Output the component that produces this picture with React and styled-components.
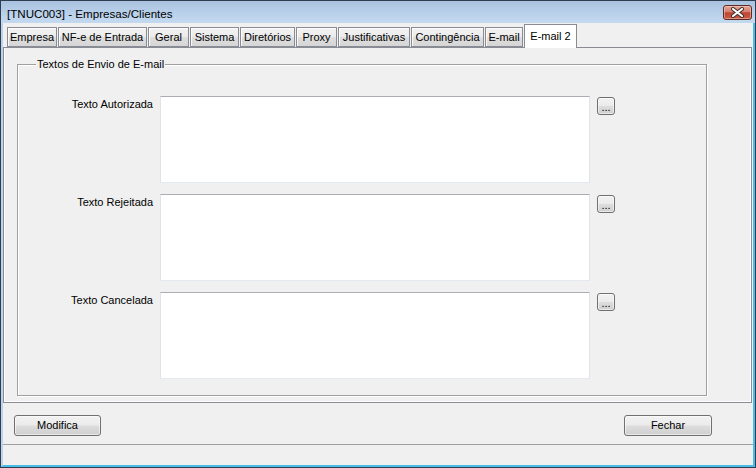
import React from "react";
import styled, { createGlobalStyle } from "styled-components";

const Global = createGlobalStyle`
  html, body { margin: 0; padding: 0; background: #ffffff; }
  body { font-family: "Liberation Sans", Arial, sans-serif; font-size: 11px; color: #000; }
  * { box-sizing: border-box; }
`;

const Window = styled.div`
  width: 756px;
  height: 468px;
  border: 1px solid #2f3d50;
  display: flex;
  flex-direction: column;
  background: #bcd3ec;
  font-family: "Liberation Sans", Arial, sans-serif;
  font-size: 11px;
`;

const TitleBar = styled.div`
  height: 22px;
  flex: none;
  display: flex;
  align-items: flex-start;
  justify-content: space-between;
  padding: 4px 3px 0 6px;
  background: linear-gradient(#a9c2df, #bdd4ed 70%, #c3d9f0);
`;

const Title = styled.div`
  margin-top: 2px;
  line-height: 13px;
  font-size: 11.6px;
  color: #000;
  white-space: nowrap;
`;

const CloseButton = styled.div`
  width: 29px;
  height: 15px;
  border: 1px solid #5b2b26;
  border-radius: 3px;
  background: linear-gradient(#e6a597 0%, #d6806f 45%, #bf4532 52%, #cc5a43 100%);
  display: flex;
  align-items: center;
  justify-content: center;
  box-shadow: inset 0 0 0 1px rgba(255, 220, 210, 0.45);
`;

const Client = styled.div`
  flex: 1;
  display: flex;
  flex-direction: column;
  background: #f0f0f0;
  border-left: 2px solid #bcd3ec;
  border-right: 2px solid #49bce8;
  border-bottom: 2px solid #49bce8;
`;

const TabStrip = styled.div`
  height: 24px;
  flex: none;
  display: flex;
  align-items: flex-end;
  gap: 1px;
  padding-left: 4px;
  position: relative;
  z-index: 1;
`;

const Tab = styled.div`
  width: ${(p) => p.$w}px;
  height: ${(p) => (p.$active ? 24 : 20)}px;
  margin-bottom: ${(p) => (p.$active ? -1 : 0)}px;
  border: 1px solid #898c95;
  border-bottom: ${(p) => (p.$active ? "none" : "1px solid #898c95")};
  background: ${(p) =>
    p.$active
      ? "#ffffff"
      : "linear-gradient(#f3f3f3 0%, #ebebeb 50%, #dedede 52%, #d6d6d6 100%)"};
  box-shadow: ${(p) => (p.$active ? "none" : "inset 1px 1px 0 rgba(255,255,255,0.8)")};
  display: flex;
  align-items: center;
  justify-content: center;
  line-height: 13px;
  white-space: nowrap;
  color: #000;
`;

const TabPanel = styled.div`
  height: 356px;
  flex: none;
  margin-right: 1px;
  border: 1px solid #898c95;
  box-shadow: inset 1px 0 0 #fff, inset -1px 0 0 #fff, inset 0 -1px 0 #fff;
  padding: 16px 0 0 13px;
`;

const GroupBox = styled.div`
  width: 690px;
  height: 332px;
  border: 1px solid #a0a0a0;
  box-shadow: 1px 1px 0 #fff, inset 1px 1px 0 #fff;
  display: flex;
  flex-direction: column;
  align-items: flex-start;
`;

const GroupTitle = styled.div`
  margin: -7px 0 0 18px;
  padding: 0 1px;
  line-height: 13px;
  background: #f0f0f0;
  white-space: nowrap;
`;

const Rows = styled.div`
  display: flex;
  flex-direction: column;
  gap: 11px;
  padding-top: 25px;
`;

const Row = styled.div`
  display: flex;
  align-items: flex-start;
`;

const FieldLabel = styled.div`
  width: 135px;
  text-align: right;
  padding-top: 2px;
  line-height: 13px;
  white-space: nowrap;
`;

const Memo = styled.textarea`
  width: 430px;
  height: 87px;
  margin: 0 0 0 7px;
  padding: 0;
  resize: none;
  background: #fff;
  border: 1px solid #e2e3ea;
  border-top-color: #abadb3;
  border-bottom-color: #e3e9ef;
  outline: none;
  font-family: inherit;
  font-size: 11px;
`;

const PushButton = styled.button`
  width: ${(p) => p.$w}px;
  height: ${(p) => p.$h}px;
  margin: 0;
  padding: 0;
  border: 1px solid #707070;
  border-radius: 3px;
  background: linear-gradient(#f2f2f2 0%, #ebebeb 48%, #dddddd 52%, #cfcfcf 100%);
  box-shadow: inset 0 0 0 1px rgba(255, 255, 255, 0.55);
  font-family: "Liberation Sans", Arial, sans-serif;
  font-size: 11px;
  line-height: 13px;
  color: #000;
  display: flex;
  align-items: center;
  justify-content: center;
`;

const EllipsisButton = styled(PushButton)`
  margin: 1px 0 0 7px;
  padding-top: 2px;
`;

const ButtonBar = styled.div`
  height: 41px;
  flex: none;
  display: flex;
  justify-content: space-between;
  align-items: flex-start;
  padding: 12px 41px 0 11px;
`;

const StatusBar = styled.div`
  flex: 1;
  border-top: 1px solid #a0a0a0;
`;

const tabs = [
  ["Empresa", 50],
  ["NF-e de Entrada", 89],
  ["Geral", 41],
  ["Sistema", 49],
  ["Diretórios", 55],
  ["Proxy", 41],
  ["Justificativas", 72],
  ["Contingência", 73],
  ["E-mail", 38],
  ["E-mail 2", 53, true],
];

const fields = ["Texto Autorizada", "Texto Rejeitada", "Texto Cancelada"];

export default function App() {
  return (
    <>
      <Global />
      <Window>
        <TitleBar>
          <Title>[TNUC003] - Empresas/Clientes</Title>
          <CloseButton>
            <svg width="15" height="11" viewBox="0 0 15 11">
              <path d="M3 2 L12 9 M12 2 L3 9" stroke="#3b2a28" strokeWidth="4" strokeLinecap="round" />
              <path d="M3 2 L12 9 M12 2 L3 9" stroke="#ffffff" strokeWidth="2.2" strokeLinecap="round" />
            </svg>
          </CloseButton>
        </TitleBar>
        <Client>
          <TabStrip>
            {tabs.map(([label, w, active]) => (
              <Tab key={label} $w={w} $active={active}>
                {label}
              </Tab>
            ))}
          </TabStrip>
          <TabPanel>
            <GroupBox>
              <GroupTitle>Textos de Envio de E-mail</GroupTitle>
              <Rows>
                {fields.map((f) => (
                  <Row key={f}>
                    <FieldLabel>{f}</FieldLabel>
                    <Memo />
                    <EllipsisButton $w={18} $h={18}>...</EllipsisButton>
                  </Row>
                ))}
              </Rows>
            </GroupBox>
          </TabPanel>
          <ButtonBar>
            <PushButton $w={87} $h={21}>Modifica</PushButton>
            <PushButton $w={88} $h={21}>Fechar</PushButton>
          </ButtonBar>
          <StatusBar />
        </Client>
      </Window>
    </>
  );
}
